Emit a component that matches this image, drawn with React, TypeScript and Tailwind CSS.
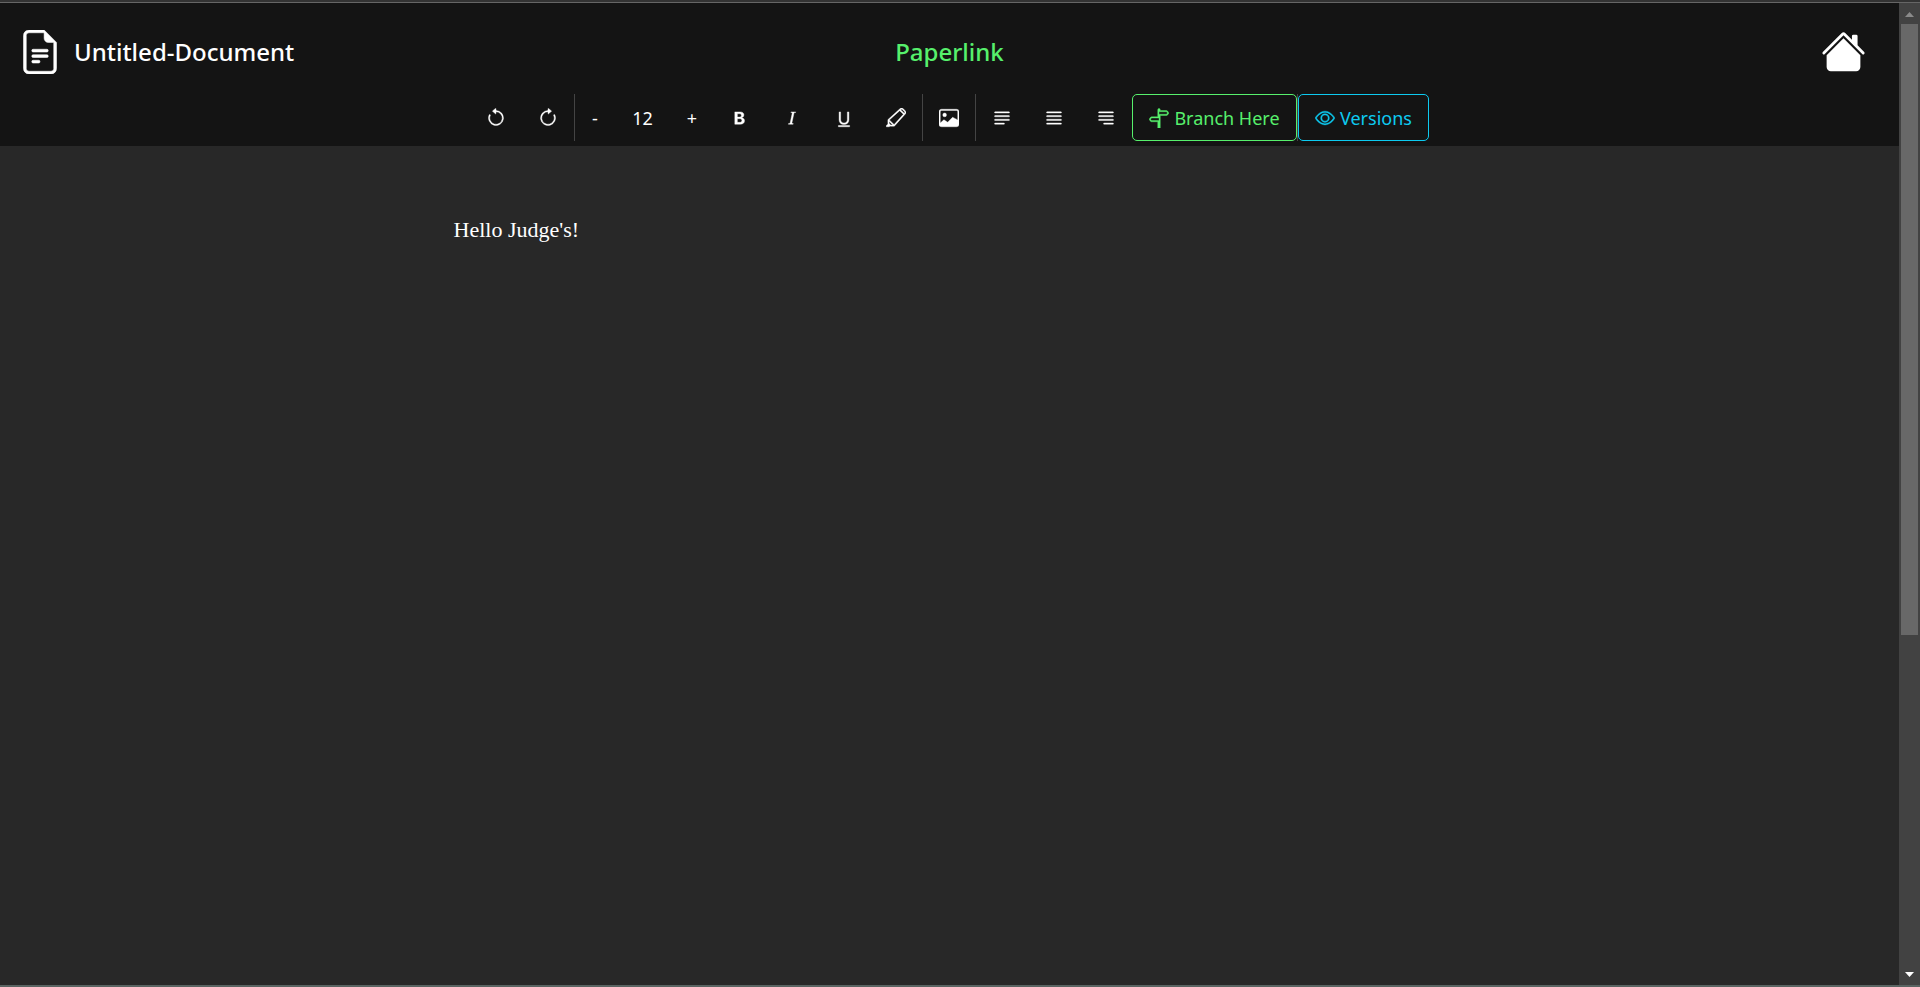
import type { ReactNode } from "react";
import {
  BsArrowClockwise,
  BsArrowCounterclockwise,
  BsEye,
  BsFileEarmarkText,
  BsHighlighter,
  BsHouseFill,
  BsImage,
  BsJustify,
  BsJustifyLeft,
  BsJustifyRight,
  BsSignpostSplit,
  BsTypeBold,
  BsTypeItalic,
  BsTypeUnderline,
} from "react-icons/bs";

function Tool({ label, children }: { label: string; children: ReactNode }) {
  return (
    <button type="button" aria-label={label} className="flex w-[52px] items-center justify-center text-xl">
      {children}
    </button>
  );
}

function Divider() {
  return <div className="w-px bg-[#444]" />;
}

function Scrollbar() {
  return (
    <div aria-hidden="true" className="flex w-[21px] shrink-0 flex-col items-center bg-[#424242] pr-px">
      <svg width="9" height="5" viewBox="0 0 9 5" className="mt-[9px] mb-[7px] shrink-0" fill="#8a8a8a">
        <path d="M4.5 0 9 5H0z" />
      </svg>
      <div className="w-[17px] grow-[611] basis-0 bg-[#686868]" />
      <div className="grow-[337] basis-0" />
      <svg width="9" height="5" viewBox="0 0 9 5" className="mb-2 shrink-0" fill="#fff">
        <path d="M0 0h9L4.5 5z" />
      </svg>
    </div>
  );
}

export default function App() {
  return (
    <div className="flex h-screen flex-col border-b-2 border-[#5a6462] bg-[#282828] font-['Noto_Sans','Open_Sans',sans-serif] text-white">
      <div className="h-[3px] shrink-0 border-b border-[#666] bg-[#333]" />
      <div className="flex min-h-0 grow">
        <div className="flex min-w-0 grow flex-col">
          <header className="bg-[#141414] pb-[5px]">
            <div className="grid h-[91px] grid-cols-3 items-center px-[18px] pt-[6px]">
              <div className="flex items-center gap-3">
                <BsFileEarmarkText className="size-11 [stroke-width:0.2]" />
                <h1 className="text-2xl font-medium">Untitled-Document</h1>
              </div>
              <p className="text-center text-2xl font-medium text-[#57f06c]">Paperlink</p>
              <a href="#home" aria-label="Home" className="mr-[15px] justify-self-end">
                <BsHouseFill className="size-[45px]" />
              </a>
            </div>
            <div
              role="toolbar"
              aria-label="Formatting"
              className="flex h-[47px] justify-center [&_svg]:[stroke-width:0.3]"
            >
              <Tool label="Undo"><BsArrowCounterclockwise /></Tool>
              <Tool label="Redo"><BsArrowClockwise /></Tool>
              <Divider />
              <button type="button" aria-label="Decrease font size" className="w-10 text-lg">-</button>
              <input
                type="text"
                aria-label="Font size"
                defaultValue="12"
                className="w-[55px] bg-transparent text-center text-lg"
              />
              <button type="button" aria-label="Increase font size" className="w-11 text-lg">+</button>
              <Tool label="Bold"><BsTypeBold /></Tool>
              <Tool label="Italic"><BsTypeItalic /></Tool>
              <Tool label="Underline"><BsTypeUnderline /></Tool>
              <Tool label="Highlight"><BsHighlighter /></Tool>
              <Divider />
              <Tool label="Insert image"><BsImage /></Tool>
              <Divider />
              <Tool label="Align left"><BsJustifyLeft /></Tool>
              <Tool label="Justify"><BsJustify /></Tool>
              <Tool label="Align right"><BsJustifyRight /></Tool>
              <button
                type="button"
                className="flex w-[165px] items-center justify-center gap-[5px] rounded-[5px] border border-[#57f06c] text-lg text-[#57f06c]"
              >
                <BsSignpostSplit className="size-5" />
                Branch Here
              </button>
              <Divider />
              <button
                type="button"
                className="flex w-[131px] items-center justify-center gap-[5px] rounded-[5px] border border-[#0dcaf0] text-lg text-[#0dcaf0]"
              >
                <BsEye className="size-5" />
                Versions
              </button>
            </div>
          </header>
          <main className="w-full max-w-[1020px] grow self-center px-[14px] pt-[66px]">
            <p className="font-['Liberation_Serif',serif] text-[22px] leading-9">Hello Judge's!</p>
          </main>
        </div>
        <Scrollbar />
      </div>
    </div>
  );
}
